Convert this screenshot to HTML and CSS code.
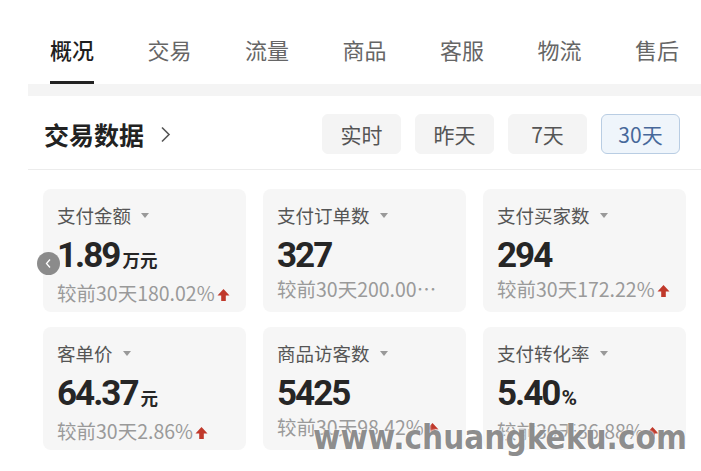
FILE: index.html
```html
<!DOCTYPE html>
<html lang="zh-CN">
<head>
    <meta charset="UTF-8">
    <meta name="viewport" content="width=device-width, initial-scale=1.0">
    <title>交易数据</title>
    <link rel="stylesheet" href="styles.css">
</head>
<body>
    <nav class="tabs">
        <a class="tab active">概况</a>
        <a class="tab">交易</a>
        <a class="tab">流量</a>
        <a class="tab">商品</a>
        <a class="tab">客服</a>
        <a class="tab">物流</a>
        <a class="tab">售后</a>
    </nav>
    <div class="band"></div>

    <section class="panel">
        <div class="panel-head">
            <h2 class="title">交易数据
                <svg class="chev" width="11" height="17" viewBox="0 0 11 17"><polyline points="2,1.5 9,8.5 2,15.5" fill="none" stroke="#555" stroke-width="1.6"/></svg>
            </h2>
            <div class="ranges">
                <button class="range">实时</button>
                <button class="range">昨天</button>
                <button class="range">7天</button>
                <button class="range on">30天</button>
            </div>
        </div>

        <div class="cards">
            <div class="card">
                <span class="back">
                    <svg width="9" height="11" viewBox="0 0 9 11"><polyline points="6,1.5 2.5,5.5 6,9.5" fill="none" stroke="#fff" stroke-width="1.3"/></svg>
                </span>
                <div class="label">支付金额 <i class="tri"></i></div>
                <div class="value">1.89<span class="unit">万元</span></div>
                <div class="compare">较前30天180.02%<svg class="up" width="13" height="14" viewBox="0 0 13 14"><path d="M6.5 1 L12.5 7.5 L8.8 7.5 L8.8 13 L4.2 13 L4.2 7.5 L0.5 7.5 Z" fill="#c0392b"/></svg></div>
            </div>
            <div class="card">
                <div class="label">支付订单数 <i class="tri"></i></div>
                <div class="value">327</div>
                <div class="compare cut">较前30天200.00%<svg class="up" width="13" height="14" viewBox="0 0 13 14"><path d="M6.5 1 L12.5 7.5 L8.8 7.5 L8.8 13 L4.2 13 L4.2 7.5 L0.5 7.5 Z" fill="#c0392b"/></svg></div>
            </div>
            <div class="card">
                <div class="label">支付买家数 <i class="tri"></i></div>
                <div class="value">294</div>
                <div class="compare">较前30天172.22%<svg class="up" width="13" height="14" viewBox="0 0 13 14"><path d="M6.5 1 L12.5 7.5 L8.8 7.5 L8.8 13 L4.2 13 L4.2 7.5 L0.5 7.5 Z" fill="#c0392b"/></svg></div>
            </div>
            <div class="card">
                <div class="label">客单价 <i class="tri"></i></div>
                <div class="value">64.37<span class="unit">元</span></div>
                <div class="compare">较前30天2.86%<svg class="up" width="13" height="14" viewBox="0 0 13 14"><path d="M6.5 1 L12.5 7.5 L8.8 7.5 L8.8 13 L4.2 13 L4.2 7.5 L0.5 7.5 Z" fill="#c0392b"/></svg></div>
            </div>
            <div class="card">
                <div class="label">商品访客数 <i class="tri"></i></div>
                <div class="value">5425</div>
                <div class="compare">较前30天98.42%<svg class="up" width="13" height="14" viewBox="0 0 13 14"><path d="M6.5 1 L12.5 7.5 L8.8 7.5 L8.8 13 L4.2 13 L4.2 7.5 L0.5 7.5 Z" fill="#c0392b"/></svg></div>
            </div>
            <div class="card">
                <div class="label">支付转化率 <i class="tri"></i></div>
                <div class="value">5.40<span class="unit pct">%</span></div>
                <div class="compare">较前30天36.88%<svg class="up" width="13" height="14" viewBox="0 0 13 14"><path d="M6.5 1 L12.5 7.5 L8.8 7.5 L8.8 13 L4.2 13 L4.2 7.5 L0.5 7.5 Z" fill="#c0392b"/></svg></div>
            </div>
        </div>
    </section>

    <div class="watermark">www.chuangkeku.com</div>
</body>
</html>
```

FILE: styles.css
```css
body {
    margin: 0;
    padding: 0;
    width: 701px;
    height: 471px;
    overflow: hidden;
    position: relative;
    background-color: #fff;
    font-family: "Noto Sans CJK SC", "Noto Sans", sans-serif;
    color: #222;
}
.tabs {
    display: flex;
    align-items: flex-end;
    gap: 53.5px;
    height: 84px;
    padding-left: 50px;
    box-sizing: border-box;
}
.tab {
    font-size: 22px;
    line-height: 30px;
    color: #666;
    padding-bottom: 20px;
    text-decoration: none;
}
.tab.active {
    color: #1f1f1f;
    font-weight: 500;
    padding-bottom: 17px;
    border-bottom: 3px solid #222;
}
.band {
    margin-left: 28px;
    height: 12px;
    background-color: #f4f4f4;
}
.panel {
    margin-left: 28px;
}
.panel-head {
    display: flex;
    justify-content: space-between;
    align-items: center;
    height: 74px;
    padding: 2px 21px 0 16px;
    box-sizing: border-box;
    border-bottom: 1px solid #ececec;
}
.title {
    margin: 0;
    font-size: 25px;
    font-weight: 700;
    color: #222;
    display: flex;
    align-items: center;
    gap: 16px;
}
.chev {
    margin-top: 1px;
}
.ranges {
    display: flex;
    gap: 14px;
}
.range {
    width: 79px;
    height: 40px;
    border: 1px solid #f4f4f4;
    border-radius: 6px;
    background-color: #f4f4f4;
    font-family: inherit;
    font-size: 21px;
    color: #555;
    padding: 0;
}
.range.on {
    background-color: #eff5fb;
    border-color: #b9cde3;
    color: #47689a;
}
.cards {
    display: grid;
    grid-template-columns: repeat(3, 203px);
    column-gap: 17px;
    row-gap: 15px;
    padding: 19px 0 0 15px;
}
.card {
    position: relative;
    height: 123px;
    box-sizing: border-box;
    padding: 14px 14px 0 14px;
    background-color: #f6f6f6;
    border-radius: 8px;
}
.label {
    font-size: 18.5px;
    line-height: 24px;
    color: #555;
    display: flex;
    align-items: center;
}
.tri {
    display: inline-block;
    margin-left: 10px;
    width: 0;
    height: 0;
    border-left: 4.5px solid transparent;
    border-right: 4.5px solid transparent;
    border-top: 5px solid #999;
}
.value {
    margin-top: 11px;
    font-family: Roboto, "Liberation Sans", sans-serif;
    font-size: 35px;
    font-weight: 700;
    line-height: 36px;
    letter-spacing: -2px;
    color: #262626;
}
.unit {
    font-family: "Noto Sans CJK SC", sans-serif;
    font-size: 17.5px;
    letter-spacing: 0;
    margin-left: 3px;
}
.unit.pct {
    font-family: Roboto, sans-serif;
    font-size: 21px;
    margin-left: 2px;
}
.compare {
    margin-top: 1px;
    font-size: 19.5px;
    line-height: 28px;
    color: #9a9a9a;
    white-space: nowrap;
    overflow: hidden;
    text-overflow: ellipsis;
}
.compare.cut {
    max-width: 164px;
}
.up {
    margin-left: 2px;
    vertical-align: -1px;
}
.back {
    position: absolute;
    left: -6px;
    top: 63px;
    width: 23px;
    height: 23px;
    border-radius: 50%;
    background-color: rgba(120, 120, 120, 0.85);
    display: flex;
    align-items: center;
    justify-content: center;
}
.watermark {
    position: absolute;
    left: 313px;
    top: 418px;
    font-family: "DejaVu Sans Condensed", "DejaVu Sans", sans-serif;
    font-stretch: condensed;
    font-weight: 700;
    font-size: 33px;
    color: rgba(125, 125, 125, 0.88);
    text-shadow: 0 0 2px #fff, 0 0 2px #fff;
    white-space: nowrap;
}
```
